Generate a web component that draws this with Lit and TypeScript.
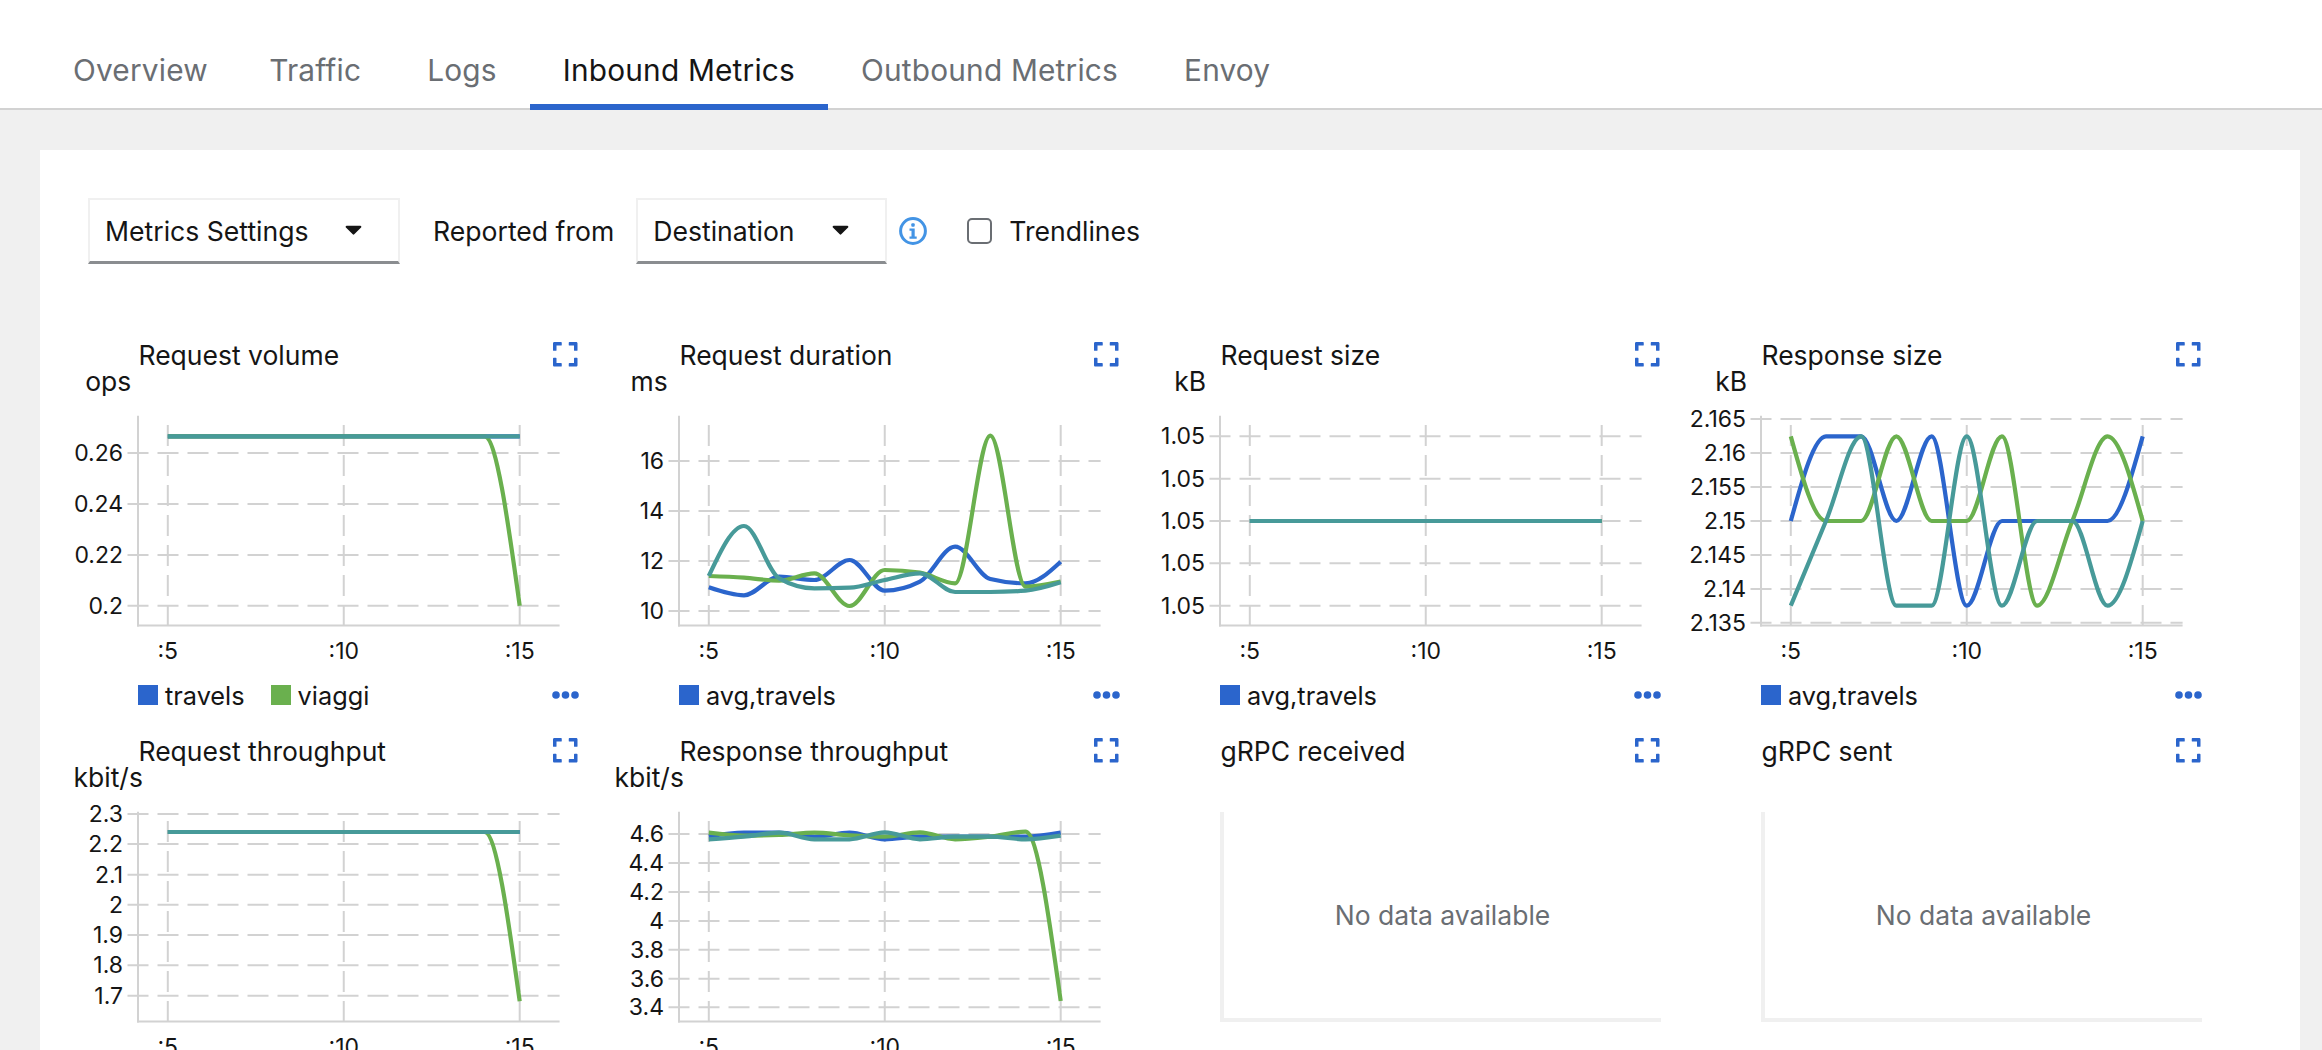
import { LitElement, html, css, svg, nothing } from "lit";
import { customElement } from "lit/decorators.js";

const BLUE = "#2b65cc";
const GREEN = "#6ab04e";
const TEAL = "#479a99";
const GRID = "#d2d2d2";

const X0 = 79.8;
const STEP = 35.19;

type Series = { color: string; ys: number[] };
type Chart = {
  title: string;
  unit?: string;
  legend?: { label: string; color: string }[];
  ticks?: { label: string; y: number }[];
  series?: Series[];
};

function monotonePath(ys: number[]): string {
  const xs = ys.map((_, i) => X0 + i * STEP);
  const n = ys.length;
  const sl: number[] = [];
  for (let i = 0; i < n - 1; i++) sl.push((ys[i + 1] - ys[i]) / (xs[i + 1] - xs[i]));
  const t: number[] = new Array(n).fill(0);
  const sign = (v: number) => (v < 0 ? -1 : 1);
  for (let i = 1; i < n - 1; i++) {
    const s0 = sl[i - 1];
    const s1 = sl[i];
    const p = (s0 + s1) / 2;
    t[i] = (sign(s0) + sign(s1)) * Math.min(Math.abs(s0), Math.abs(s1), 0.5 * Math.abs(p)) || 0;
  }
  t[0] = (3 * sl[0] - t[1]) / 2;
  t[n - 1] = (3 * sl[n - 2] - t[n - 2]) / 2;
  let d = `M${xs[0]},${ys[0].toFixed(2)}`;
  for (let i = 0; i < n - 1; i++) {
    const h = (xs[i + 1] - xs[i]) / 3;
    d += `C${(xs[i] + h).toFixed(2)},${(ys[i] + h * t[i]).toFixed(2)} ${(xs[i + 1] - h).toFixed(2)},${(ys[i + 1] - h * t[i + 1]).toFixed(2)} ${xs[i + 1].toFixed(2)},${ys[i + 1].toFixed(2)}`;
  }
  return d;
}

const z1 = (a: number[]) => a.map((v) => v / 3 - 50);
const z2 = (a: number[]) => a.map((v) => v / 3 - 46);
const flat = (v: number) => new Array(11).fill(v) as number[];
const drop = (v: number, e: number) => [...new Array(10).fill(v), e] as number[];
const avg = [{ label: "avg,travels", color: BLUE }];

const CHARTS: Chart[] = [
  {
    title: "Request volume",
    unit: "ops",
    legend: [
      { label: "travels", color: BLUE },
      { label: "viaggi", color: GREEN },
    ],
    ticks: [
      { label: "0.26", y: 83 },
      { label: "0.24", y: 134 },
      { label: "0.22", y: 185 },
      { label: "0.2", y: 235.7 },
    ],
    series: [
      { color: BLUE, ys: flat(66.3) },
      { color: GREEN, ys: drop(66.3, 235.7) },
      { color: TEAL, ys: flat(66.3) },
    ],
  },
  {
    title: "Request duration",
    unit: "ms",
    legend: avg,
    ticks: [
      { label: "16", y: 91 },
      { label: "14", y: 141 },
      { label: "12", y: 191 },
      { label: "10", y: 241 },
    ],
    series: [
      { color: BLUE, ys: z1([802, 826, 770, 780, 720, 812, 785, 680, 777, 790, 725]) },
      { color: GREEN, ys: z1([768, 773, 782, 760, 858, 750, 758, 790, 347, 800, 785]) },
      { color: TEAL, ys: z1([768, 618, 775, 805, 803, 780, 760, 816, 816, 812, 787]) },
    ],
  },
  {
    title: "Request size",
    unit: "kB",
    legend: avg,
    ticks: [66.3, 108.7, 151, 193.3, 235.7].map((y) => ({ label: "1.05", y })),
    series: [
      { color: BLUE, ys: flat(151) },
      { color: GREEN, ys: flat(151) },
      { color: TEAL, ys: flat(151) },
    ],
  },
  {
    title: "Response size",
    unit: "kB",
    legend: avg,
    ticks: [
      { label: "2.165", y: 49 },
      { label: "2.16", y: 83 },
      { label: "2.155", y: 117 },
      { label: "2.15", y: 151 },
      { label: "2.145", y: 185 },
      { label: "2.14", y: 219 },
      { label: "2.135", y: 252.7 },
    ],
    series: [
      { color: BLUE, ys: z1([603, 349, 349, 603, 349, 857, 603, 603, 603, 603, 349]) },
      { color: GREEN, ys: z1([349, 603, 603, 349, 603, 603, 349, 857, 603, 349, 603]) },
      { color: TEAL, ys: z1([857, 603, 349, 857, 857, 349, 857, 603, 603, 857, 603]) },
    ],
  },
  {
    title: "Request throughput",
    unit: "kbit/s",
    ticks: [
      { label: "2.3", y: 48 },
      { label: "2.2", y: 78 },
      { label: "2.1", y: 108.7 },
      { label: "2", y: 138.7 },
      { label: "1.9", y: 169 },
      { label: "1.8", y: 199.3 },
      { label: "1.7", y: 229.7 },
    ],
    series: [
      { color: BLUE, ys: flat(66) },
      { color: GREEN, ys: drop(66, 235.3) },
      { color: TEAL, ys: flat(66) },
    ],
  },
  {
    title: "Response throughput",
    unit: "kbit/s",
    ticks: [
      { label: "4.6", y: 68 },
      { label: "4.4", y: 97 },
      { label: "4.2", y: 126 },
      { label: "4", y: 155 },
      { label: "3.8", y: 183.7 },
      { label: "3.6", y: 212.7 },
      { label: "3.4", y: 241.3 },
    ],
    series: [
      { color: BLUE, ys: z2([349, 338, 338, 350, 338, 358, 350, 350, 350, 350, 338]) },
      { color: GREEN, ys: z2([338, 347, 345, 338, 346, 350, 337, 358, 350, 335, 843]) },
      { color: TEAL, ys: z2([358, 350, 338, 358, 358, 337, 358, 350, 350, 358, 347]) },
    ],
  },
  { title: "gRPC received" },
  { title: "gRPC sent" },
];

const EXPAND =
  "M0 180V56c0-13.3 10.7-24 24-24h124c6.6 0 12 5.4 12 12v40c0 6.6-5.4 12-12 12H64v84c0 6.6-5.4 12-12 12H12c-6.6 0-12-5.4-12-12zm288-136v40c0 6.6 5.4 12 12 12h84v84c0 6.6 5.4 12 12 12h40c6.6 0 12-5.4 12-12V56c0-13.3-10.7-24-24-24H300c-6.6 0-12 5.4-12 12zm148 276h-40c-6.6 0-12 5.4-12 12v84h-84c-6.6 0-12 5.4-12 12v40c0 6.6 5.4 12 12 12h124c13.3 0 24-10.7 24-24V332c0-6.6-5.4-12-12-12zM160 468v-40c0-6.6-5.4-12-12-12H64v-84c0-6.6-5.4-12-12-12H12c-6.6 0-12 5.4-12 12v124c0 13.3 10.7 24 24 24h124c6.6 0 12-5.4 12-12z";

const caret = html`<svg class="caret" viewBox="0 0 320 200" aria-hidden="true">
  <path d="M31.3 10h257.3c17.8 0 26.7 21.5 14.1 34.1L174.1 172.8c-7.8 7.8-20.5 7.8-28.3 0L17.2 44.1C4.6 31.5 13.5 10 31.3 10z" />
</svg>`;

@customElement("app-root")
export class AppRoot extends LitElement {
  static styles = css`
    :host {
      display: block;
      height: 1050px;
      overflow: hidden;
      background: #f0f0f0;
      font-family: Inter, "Noto Sans", sans-serif;
      color: #151515;
    }
    .tabs {
      display: flex;
      height: 110px;
      box-sizing: border-box;
      padding: 0 0 0 40px;
      background: #fff;
      border-bottom: 2px solid #d2d2d2;
    }
    .tab {
      position: relative;
      display: flex;
      align-items: flex-end;
      padding: 0 33px 21px;
      font-size: 29.8px;
      line-height: 34px;
      letter-spacing: 0.2px;
      color: #6a6e73;
    }
    .tab:first-child {
      padding-right: 28.4px;
    }
    .tab.active {
      color: #151515;
    }
    .tab.active::after {
      content: "";
      position: absolute;
      left: 0;
      right: 0;
      bottom: -2px;
      height: 6px;
      background: #2b65cc;
    }
    .card {
      margin: 40px 22px 0 40px;
      height: 900px;
      background: #fff;
      padding: 48px 0 0 48px;
      box-sizing: border-box;
    }
    .toolbar {
      display: flex;
      align-items: center;
      height: 66px;
      font-size: 26.6px;
    }
    .select {
      box-sizing: border-box;
      height: 66px;
      display: flex;
      align-items: center;
      justify-content: space-between;
      border: 2px solid #f0f0f0;
      border-bottom: 3px solid #8a8d90;
      padding: 0 36px 0 15px;
    }
    .select.metrics {
      width: 312px;
    }
    .select.dest {
      width: 251px;
    }
    .caret {
      width: 17px;
      height: 11px;
      fill: #151515;
    }
    .from {
      margin: 0 22px 0 33px;
    }
    .info {
      width: 28px;
      height: 28px;
      margin: 0 0 0 12px;
    }
    .check {
      box-sizing: border-box;
      width: 25px;
      height: 26px;
      border: 2.5px solid #6a6e73;
      border-radius: 5px;
      margin: 0 17px 0 40px;
    }
    .grid {
      display: grid;
      grid-template-columns: repeat(4, 541px);
      grid-auto-rows: 396px;
      margin-top: 66px;
    }
    .cell {
      display: flex;
      flex-direction: column;
    }
    .head {
      display: flex;
      justify-content: space-between;
      align-items: center;
      box-sizing: border-box;
      width: 489.5px;
      height: 40px;
      padding: 9px 0 0 50.5px;
      font-size: 26.5px;
    }
    .expand {
      width: 24.5px;
      height: 24.6px;
      fill: #2b65cc;
    }
    .plot {
      width: 541px;
      height: 300px;
      overflow: visible;
      display: block;
    }
    .plot text {
      font-size: 23px;
      fill: #151515;
    }
    .plot text.unit {
      font-size: 26.5px;
    }
    .legend {
      display: flex;
      align-items: center;
      box-sizing: border-box;
      width: 491px;
      height: 50px;
      padding-left: 50px;
      font-size: 25.3px;
    }
    .swatch {
      width: 20px;
      height: 20px;
      margin-right: 7px;
    }
    .entry {
      display: flex;
      align-items: center;
      margin-right: 26px;
    }
    .dots {
      margin-left: auto;
      width: 27px;
      height: 8px;
      fill: #2b65cc;
    }
    .empty {
      box-sizing: border-box;
      margin: 46px 0 0 50px;
      width: 441px;
      height: 210px;
      border-left: 4px solid #f0f0f0;
      border-bottom: 4px solid #f0f0f0;
      display: flex;
      align-items: center;
      justify-content: center;
      color: #6a6e73;
      font-size: 26.5px;
    }
  `;

  private plot(c: Chart) {
    const gridX = [X0, X0 + 5 * STEP, X0 + 10 * STEP];
    return html`<svg class="plot" viewBox="0 0 541 300">
      ${svg`
        <text class="unit" x="20.2" y="21" text-anchor="middle">${c.unit}</text>
        ${c.ticks!.map(
          (t) => svg`
            <line x1="39.5" x2="471.6" y1=${t.y} y2=${t.y} stroke=${GRID} stroke-width="2" stroke-dasharray="21 9" />
            <text x="35" y=${t.y + 8} text-anchor="end">${t.label}</text>`
        )}
        ${gridX.map(
          (x, i) => svg`
            <line x1=${x} x2=${x} y1="55" y2="265" stroke=${GRID} stroke-width="2" stroke-dasharray="21 9" />
            <text x=${x} y="289" text-anchor="middle">${[":5", ":10", ":15"][i]}</text>`
        )}
        <line x1="50" x2="50" y1="45.7" y2="256.5" stroke=${GRID} stroke-width="2" />
        <line x1="49" x2="471.6" y1="255.5" y2="255.5" stroke=${GRID} stroke-width="2" />
        ${c.series!.map(
          (s) => svg`<path d=${monotonePath(s.ys)} fill="none" stroke=${s.color} stroke-width="4.2" />`
        )}
      `}
    </svg>`;
  }

  private legend(c: Chart) {
    if (!c.legend) return nothing;
    return html`<div class="legend">
      ${c.legend.map(
        (l) => html`<span class="entry"
          ><span class="swatch" style="background:${l.color}"></span>${l.label}</span
        >`
      )}
      <svg class="dots" viewBox="0 0 27 8" aria-hidden="true">
        <circle cx="4" cy="4" r="3.8" />
        <circle cx="13.5" cy="4" r="3.8" />
        <circle cx="23" cy="4" r="3.8" />
      </svg>
    </div>`;
  }

  render() {
    const tabs = ["Overview", "Traffic", "Logs", "Inbound Metrics", "Outbound Metrics", "Envoy"];
    return html`
      <nav class="tabs">
        ${tabs.map(
          (t) => html`<div class="tab ${t === "Inbound Metrics" ? "active" : ""}">${t}</div>`
        )}
      </nav>
      <main class="card">
        <div class="toolbar">
          <div class="select metrics">Metrics Settings ${caret}</div>
          <span class="from">Reported from</span>
          <div class="select dest">Destination ${caret}</div>
          <svg class="info" viewBox="0 0 28 28" aria-hidden="true">
            <circle cx="14" cy="14" r="12.4" fill="none" stroke="#4394e5" stroke-width="3" />
            <rect x="12.3" y="6.3" width="3.4" height="3.4" rx="1" fill="#4394e5" />
            <path d="M10.5 11.5h5.2v8h2v2.2h-7.2v-2.2h2v-5.8h-2z" fill="#4394e5" />
          </svg>
          <span class="check"></span>
          <span>Trendlines</span>
        </div>
        <section class="grid">
          ${CHARTS.map(
            (c) => html`<div class="cell">
              <div class="head">
                <span>${c.title}</span>
                <svg class="expand" viewBox="0 32 448 448" aria-hidden="true"><path d=${EXPAND} /></svg>
              </div>
              ${c.series ? this.plot(c) : html`<div class="empty">No data available</div>`}
              ${this.legend(c)}
            </div>`
          )}
        </section>
      </main>
    `;
  }
}
